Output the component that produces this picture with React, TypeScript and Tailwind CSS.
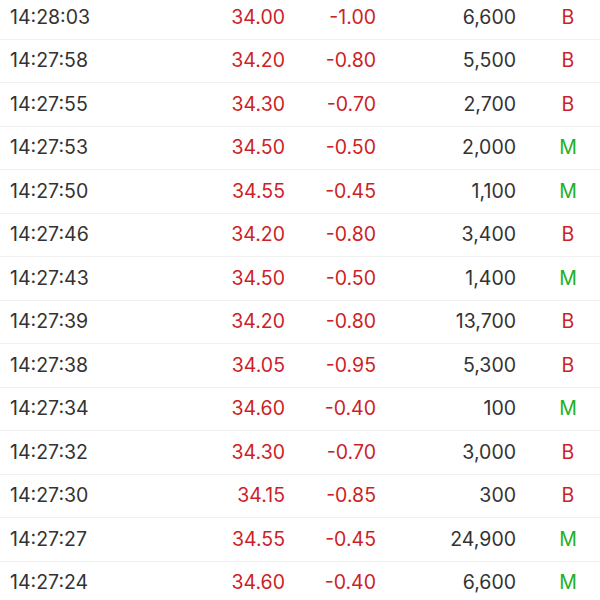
const trades: [string, string, string, string, 'B' | 'M'][] = [
  ['14:28:03', '34.00', '-1.00', '6,600', 'B'],
  ['14:27:58', '34.20', '-0.80', '5,500', 'B'],
  ['14:27:55', '34.30', '-0.70', '2,700', 'B'],
  ['14:27:53', '34.50', '-0.50', '2,000', 'M'],
  ['14:27:50', '34.55', '-0.45', '1,100', 'M'],
  ['14:27:46', '34.20', '-0.80', '3,400', 'B'],
  ['14:27:43', '34.50', '-0.50', '1,400', 'M'],
  ['14:27:39', '34.20', '-0.80', '13,700', 'B'],
  ['14:27:38', '34.05', '-0.95', '5,300', 'B'],
  ['14:27:34', '34.60', '-0.40', '100', 'M'],
  ['14:27:32', '34.30', '-0.70', '3,000', 'B'],
  ['14:27:30', '34.15', '-0.85', '300', 'B'],
  ['14:27:27', '34.55', '-0.45', '24,900', 'M'],
  ['14:27:24', '34.60', '-0.40', '6,600', 'M'],
];

export default function App() {
  return (
    <div className="w-[600px] h-[600px] overflow-hidden bg-white font-['Inter',sans-serif] text-[19.5px]">
      <div className="-mt-[4px]">
        {trades.map(([time, price, change, volume, side]) => (
          <div
            key={time}
            className="flex items-center h-[43.5px] border-b border-[#f0f0f0] leading-none"
          >
            <div className="w-[200px] pl-[10px] text-[#333333]">{time}</div>
            <div className="w-[85px] text-right text-[#cc1f27]">{price}</div>
            <div className="w-[91px] text-right text-[#cc1f27]">{change}</div>
            <div className="w-[140px] text-right text-[#333333]">{volume}</div>
            <div
              className={
                side === 'B'
                  ? 'w-[40px] ml-[32px] text-center text-[#cc1f27]'
                  : 'w-[40px] ml-[32px] text-center text-[#22b022]'
              }
            >
              {side}
            </div>
          </div>
        ))}
      </div>
    </div>
  );
}
